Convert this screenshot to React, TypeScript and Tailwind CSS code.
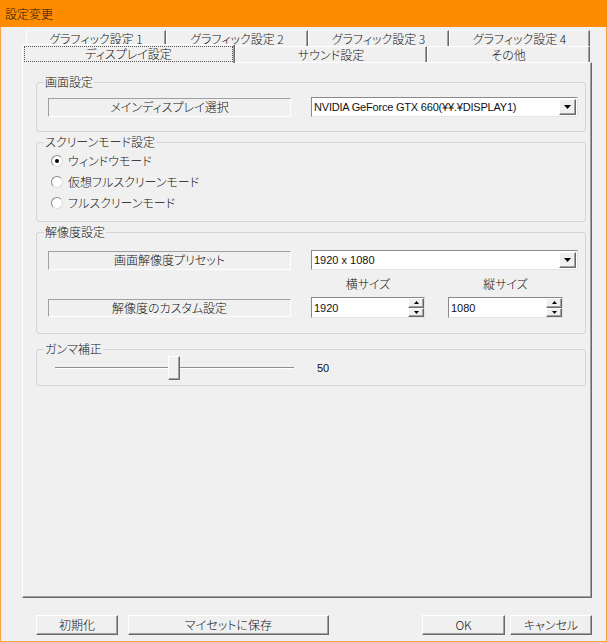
import type { ReactNode } from 'react';

const raised =
  'border border-t-white border-l-white border-r-[#696969] border-b-[#696969] shadow-[inset_-1px_-1px_0_#a0a0a0]';
const sunken =
  'border border-t-[#8a8a8a] border-l-[#8a8a8a] border-r-[#e3e3e3] border-b-[#e3e3e3] bg-white';
const latin = "font-['Liberation_Sans',Arial,sans-serif] font-normal text-[11px]";

function Tab({ label, className }: { label: string; className: string }) {
  return (
    <div
      className={`h-full border-t border-l border-r border-t-white border-l-white border-r-[#696969] shadow-[inset_-1px_0_0_#a0a0a0] flex items-center justify-center ${className}`}
    >
      {label}
    </div>
  );
}

function Group({ title, className, children }: { title: string; className: string; children?: ReactNode }) {
  return (
    <div className={`relative w-[550px] border border-[#d5d5d5] rounded-[3px] ${className}`}>
      <span className="absolute -top-[9px] left-[7px] px-[1px] bg-[#f0f0f0] leading-[16px]">{title}</span>
      {children}
    </div>
  );
}

function LabelBox({ text, className }: { text: string; className: string }) {
  return (
    <div
      className={`w-[243px] border border-t-[#a0a0a0] border-l-[#a0a0a0] border-r-white border-b-white flex items-center justify-center ${className}`}
    >
      {text}
    </div>
  );
}

function Combo({ value, tight }: { value: string; tight?: boolean }) {
  return (
    <div className={`ml-[20px] w-[267px] h-[20px] flex ${sunken}`}>
      <div className={`flex-1 pl-[2px] flex items-center ${latin} ${tight ? 'tracking-[-0.2px]' : ''}`}>{value}</div>
      <div className={`w-[17px] my-[1px] mr-[1px] bg-[#f0f0f0] flex items-center justify-center ${raised}`}>
        <svg width="7" height="4" viewBox="0 0 7 4">
          <polygon points="0,0 7,0 3.5,4" fill="#000" />
        </svg>
      </div>
    </div>
  );
}

function Spin({ value, className }: { value: string; className: string }) {
  return (
    <div className={`h-[21px] flex ${sunken} ${className}`}>
      <div className={`flex-1 pl-[2px] flex items-center ${latin}`}>{value}</div>
      <div className="w-[16px] flex flex-col">
        <div className={`flex-1 bg-[#f0f0f0] flex items-center justify-center ${raised}`}>
          <svg width="5" height="3" viewBox="0 0 5 3">
            <polygon points="2.5,0 5,3 0,3" fill="#000" />
          </svg>
        </div>
        <div className={`flex-1 bg-[#f0f0f0] flex items-center justify-center ${raised}`}>
          <svg width="5" height="3" viewBox="0 0 5 3">
            <polygon points="0,0 5,0 2.5,3" fill="#000" />
          </svg>
        </div>
      </div>
    </div>
  );
}

function Radio({ label, checked }: { label: string; checked?: boolean }) {
  return (
    <div className="h-[21px] flex items-center">
      <div className="w-[12px] h-[12px] rounded-full bg-white border border-t-[#8a8a8a] border-l-[#8a8a8a] border-r-[#dcdcdc] border-b-[#dcdcdc] flex items-center justify-center">
        {checked && <div className="w-[4px] h-[4px] rounded-full bg-black" />}
      </div>
      <span className="ml-[5px]">{label}</span>
    </div>
  );
}

function Button({ label, className }: { label: string; className: string }) {
  return (
    <div className={`h-[20px] bg-[#f0f0f0] flex items-center justify-center ${raised} ${className}`}>{label}</div>
  );
}

export default function App() {
  const gamma = 50;
  const thumbLeft = 4 + Math.round((gamma / 100) * (238 - 12));

  return (
    <div className="w-[607px] h-[642px] flex flex-col bg-[#f0f0f0] font-['Noto_Sans_CJK_JP',sans-serif] font-light [font-feature-settings:'palt'] text-[12px] leading-[16px] text-[#111]">
      <div className="h-[27px] shrink-0 bg-[#ff8c00] pl-[5px] flex items-center">設定変更</div>

      <div className="flex-1 flex flex-col border-l border-r border-b border-[#f5a346]">
        {/* tabs */}
        <div className="mt-[3px] ml-[25px] w-[564px] h-[16px] flex">
          <Tab label="グラフィック設定 1" className="w-[140px]" />
          <Tab label="グラフィック設定 2" className="w-[142px]" />
          <Tab label="グラフィック設定 3" className="w-[141px]" />
          <Tab label="グラフィック設定 4" className="w-[141px]" />
        </div>
        <div className="ml-[21px] w-[568px] h-[16px] flex items-start">
          <div className="relative z-10 w-[213px] h-[19px] -mt-[2px] p-[1px] bg-[#f0f0f0] border-t border-l border-r border-t-white border-l-white border-r-[#696969] shadow-[inset_-1px_0_0_#a0a0a0]">
            <div className="h-[16px] border border-dotted border-[#555] flex items-center justify-center">
              ディスプレイ設定
            </div>
          </div>
          <Tab label="サウンド設定" className="w-[192px]" />
          <Tab label="その他" className="w-[163px]" />
        </div>

        {/* panel */}
        <div className="ml-[21px] w-[570px] h-[536px] pl-[13px] pt-[19px] border border-t-white border-l-white border-r-[#696969] border-b-[#696969] shadow-[inset_-1px_-1px_0_#a0a0a0]">
          <Group title="画面設定" className="h-[50px] pt-[14px] pl-[11px]">
            <div className="h-[20px] flex items-center">
              <LabelBox text="メインディスプレイ選択" className="h-[19px]" />
              <Combo value="NVIDIA GeForce GTX 660(¥¥.¥DISPLAY1)" tight />
            </div>
          </Group>

          <Group title="スクリーンモード設定" className="mt-[10px] h-[80px] pt-[7px] pl-[14px]">
            <Radio label="ウィンドウモード" checked />
            <Radio label="仮想フルスクリーンモード" />
            <Radio label="フルスクリーンモード" />
          </Group>

          <Group title="解像度設定" className="mt-[10px] h-[102px] pt-[17px] pl-[11px]">
            <div className="h-[20px] flex items-center">
              <LabelBox text="画面解像度プリセット" className="h-[19px]" />
              <Combo value="1920 x 1080" />
            </div>
            <div className="mt-[6px] flex items-end">
              <LabelBox text="解像度のカスタム設定" className="h-[18px] mb-[1px]" />
              <div className="ml-[20px] w-[267px] flex flex-col">
                <div className="h-[16px] flex">
                  <div className="w-[114px] text-center">横サイズ</div>
                  <div className="ml-[23px] w-[115px] text-center">縦サイズ</div>
                </div>
                <div className="mt-[5px] flex">
                  <Spin value="1920" className="w-[114px]" />
                  <Spin value="1080" className="ml-[23px] w-[115px]" />
                </div>
              </div>
            </div>
          </Group>

          <Group title="ガンマ補正" className="mt-[15px] h-[37px] pt-[6px] pl-[14px]">
            <div className="h-[24px] flex items-center">
              <div className="relative w-[247px] h-[24px] flex items-center px-[4px]">
                <div className="w-full h-[2px] border-t border-t-[#8f8f8f] border-b border-b-white" />
                <div
                  className={`absolute top-0 w-[12px] h-[24px] bg-[#f0f0f0] ${raised}`}
                  style={{ left: thumbLeft }}
                />
              </div>
              <span className={`ml-[19px] ${latin}`}>{gamma}</span>
            </div>
          </Group>
        </div>

        {/* buttons */}
        <div className="mt-[17px] ml-[35px] pr-[14px] flex">
          <Button label="初期化" className="w-[82px]" />
          <Button label="マイセットに保存" className="ml-[10px] w-[201px]" />
          <Button label="OK" className="ml-auto w-[83px] border-[#646464]" />
          <Button label="キャンセル" className="ml-[5px] w-[82px]" />
        </div>
      </div>
    </div>
  );
}
